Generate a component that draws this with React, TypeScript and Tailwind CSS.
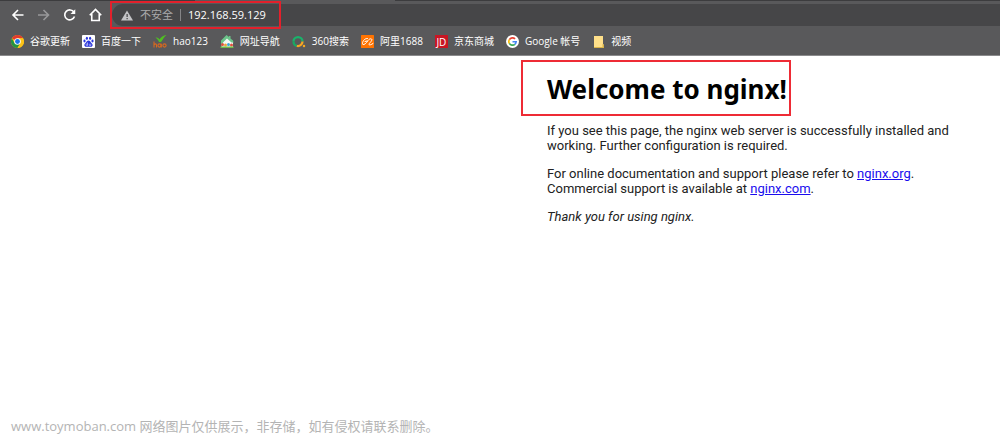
import type { ReactNode } from "react";

type Bookmark = {
  label: string;
  href: string;
  icon: ReactNode;
};

function ChromeIcon() {
  return (
    <svg viewBox="0 0 48 48" className="size-[13px]" aria-hidden="true">
      <circle cx="24" cy="24" r="24" fill="#fbc116" />
      <path d="M24 24 3.2 12A24 24 0 0 1 44.8 12H24z" fill="#e33b2e" />
      <path d="M3.2 12A24 24 0 0 0 24 48l10.4-18L24 24 13.6 30z" fill="#229342" />
      <path d="M24 12h20.8A24 24 0 0 1 24 48l10.4-18z" fill="#fbc116" />
      <circle cx="24" cy="24" r="12" fill="#fff" />
      <circle cx="24" cy="24" r="9" fill="#1a73e8" />
    </svg>
  );
}

function BaiduIcon() {
  return (
    <svg viewBox="0 0 26 26" className="size-[13px]" aria-hidden="true">
      <rect width="26" height="26" rx="2" fill="#fff" />
      <g fill="#2b36dc">
        <ellipse cx="5" cy="12" rx="2.2" ry="2.8" />
        <ellipse cx="9.800" cy="6.500" rx="2.2" ry="3" />
        <ellipse cx="16.200" cy="6.500" rx="2.2" ry="3" />
        <ellipse cx="21" cy="12" rx="2.2" ry="2.8" />
        <path d="M13 11c3 0 4 3 5.800 4.800 2.200 2 3.100 3.600 2.200 5.700-1.200 2.700-4.200 2.100-8 2.100s-6.800.6-8-2.100c-.9-2.100 0-3.700 2.200-5.700C9 14 10 11 13 11z" />
      </g>
      <path d="M11 15v6H9.500a1.500 1.500 0 1 1 0-3H11M14.500 17.500V20q0 1 1 1H17.500v-3.500" fill="none" stroke="#fff" strokeWidth="1" />
    </svg>
  );
}

function HaoIcon() {
  return (
    <svg viewBox="0 0 28 26" className="h-[13px] w-[14px]" aria-hidden="true">
      <path d="M5 5c4 0 6 1 8 4C16 4 20 1 27 0c-5 4-7 9-11 14h-4C11 10 8 8 5 5z" fill="#4fc021" />
      <g fill="none" stroke="#d9691e" strokeWidth="2.200">
        <path d="M2 13v12M2 20c1-3 5-3 5 0v5" />
        <circle cx="13" cy="21" r="3.200" />
        <path d="M16.500 17.500V25" />
        <circle cx="23" cy="21" r="3.200" />
      </g>
    </svg>
  );
}

function HouseIcon() {
  return (
    <svg viewBox="0 0 28 26" className="h-[13px] w-[14px]" aria-hidden="true">
      <path d="M3 13v12h23V13L14 4z" fill="#f5f7f5" />
      <path d="M13 0 2 11v6l3-1 9-9 9 8h4l-1-4-5-4V2h-3v2z" fill="#6cc48a" />
      <path d="M2 12h3v8H2z" fill="#6cc48a" />
      <circle cx="5" cy="19" r="3" fill="#e0503f" />
      <circle cx="11" cy="20" r="3" fill="#f0a33c" />
      <circle cx="17" cy="19" r="3" fill="#3aa6d8" />
      <circle cx="23" cy="20" r="3" fill="#e0503f" />
      <path d="M1 23h26v3H1z" fill="#6ebb4a" />
    </svg>
  );
}

function SearchRingIcon() {
  return (
    <svg viewBox="0 0 28 26" className="h-[13px] w-[14px]" aria-hidden="true">
      <g fill="none" strokeWidth="4.500">
        <path d="M3 13a9 9 0 0 1 18 0" stroke="#19b36b" />
        <path d="M21 13a9 9 0 0 1-12 8.500" stroke="#f5a623" />
        <path d="M3 13a9 9 0 0 0 6.500 8.700" stroke="#19a863" />
      </g>
      <circle cx="24" cy="22" r="2.500" fill="#f5a623" />
    </svg>
  );
}

function AlibabaIcon() {
  return (
    <svg viewBox="0 0 26 26" className="size-[13px]" aria-hidden="true">
      <rect width="26" height="26" rx="1" fill="#ff7300" />
      <path
        d="M13 7C8 6 3 12 3 17c0 5 7 1 11-6 2-3 5-4 7-3 3 2-4 8-5 10-1 3 4 2 8-1M8 13l4-1"
        fill="none"
        stroke="#fff"
        strokeWidth="2"
        strokeLinecap="round"
      />
    </svg>
  );
}

function JdIcon() {
  return (
    <span
      aria-hidden="true"
      className="grid size-[13px] place-items-center bg-[#c81623] font-['Open_Sans',sans-serif] text-[10px] leading-none text-white"
    >
      JD
    </span>
  );
}

function GoogleIcon() {
  return (
    <svg viewBox="0 0 48 48" className="size-[13px]" aria-hidden="true">
      <circle cx="24" cy="24" r="24" fill="#fff" />
      <g fill="none" strokeWidth="6">
        <path d="M33.500 14.500A13.500 13.500 0 0 0 12.300 17.200" stroke="#ea4335" />
        <path d="M12.300 17.200a13.500 13.500 0 0 0 0 13.600" stroke="#fbbc05" />
        <path d="M12.300 30.800a13.500 13.500 0 0 0 20.400 3.500" stroke="#34a853" />
        <path d="M32.700 34.300A13.500 13.500 0 0 0 37.500 25H24" stroke="#4285f4" />
      </g>
    </svg>
  );
}

function FolderIcon() {
  return (
    <span className="grid w-[13px] place-items-center" aria-hidden="true">
      <svg viewBox="0 0 20 24" className="h-[12px] w-[10px]">
        <path d="M0 0h18v16l2 2v6H0z" fill="#ffe08a" />
        <path d="M0 22h20v2H0zM17 16l3 2v6h-3z" fill="#d9b44a" />
      </svg>
    </span>
  );
}

const BOOKMARKS: Bookmark[] = [
  { label: "谷歌更新", href: "#chrome", icon: <ChromeIcon /> },
  { label: "百度一下", href: "#baidu", icon: <BaiduIcon /> },
  { label: "hao123", href: "#hao123", icon: <HaoIcon /> },
  { label: "网址导航", href: "#nav", icon: <HouseIcon /> },
  { label: "360搜索", href: "#so", icon: <SearchRingIcon /> },
  { label: "阿里1688", href: "#1688", icon: <AlibabaIcon /> },
  { label: "京东商城", href: "#jd", icon: <JdIcon /> },
  { label: "Google 帐号", href: "#google", icon: <GoogleIcon /> },
  { label: "视频", href: "#video", icon: <FolderIcon /> },
];

function NavButton({
  label,
  disabled,
  children,
}: {
  label: string;
  disabled?: boolean;
  children: ReactNode;
}) {
  return (
    <button
      type="button"
      aria-label={label}
      disabled={disabled}
      className="grid size-[14px] place-items-center text-white disabled:text-[#98989a]"
    >
      <svg
        viewBox="0 0 28 28"
        className="size-[14px]"
        fill="none"
        stroke="currentColor"
        strokeWidth="3.200"
        aria-hidden="true"
      >
        {children}
      </svg>
    </button>
  );
}

function Toolbar() {
  return (
    <div className="flex h-[28px] items-center pl-[11px]">
      <div className="flex shrink-0 items-center gap-3">
        <NavButton label="Back">
          <path d="M25 14H4M14 4 4 14l10 10" />
        </NavButton>
        <NavButton label="Forward" disabled>
          <path d="M2 14h21M13 4l10 10-10 10" />
        </NavButton>
        <NavButton label="Reload">
          <path d="M22 8.500A10 10 0 1 0 23 17" />
          <path d="M24.500 2.500V12H15z" fill="currentColor" stroke="none" />
        </NavButton>
        <NavButton label="Home">
          <path d="M1.500 14.500 13 3l11.500 11.500M5.500 12v13h15V12" />
        </NavButton>
      </div>
      <div className="relative ml-[9px] flex h-[22px] flex-1 items-center rounded-l-full bg-[#464648] pl-[9px]">
        <svg viewBox="0 0 24 22" className="h-[11px] w-[12px] shrink-0" aria-hidden="true">
          <path d="M12 1 24 21H0z" fill="#c4c4c6" />
          <path d="M11 8h2.500v6H11zM11 16h2.500v2.500H11z" fill="#464648" />
        </svg>
        <label htmlFor="address" className="ml-[7px] shrink-0 text-[11px] text-[#a9a9ab]">
          不安全
        </label>
        <span className="mx-[7px] h-3 w-px shrink-0 bg-[#858587]" />
        <input
          id="address"
          type="text"
          defaultValue="192.168.59.129"
          className="min-w-0 flex-1 bg-transparent text-[11px] font-medium text-white outline-none"
        />
        <div className="pointer-events-none absolute -top-[3px] -left-[2px] h-[28px] w-[171px] border-2 border-[#e3202b]" />
      </div>
    </div>
  );
}

export default function App() {
  return (
    <div className="flex min-h-screen flex-col bg-white">
      <header className="border-b border-[#8a8a8c] bg-[#59595b] font-['Open_Sans','Noto_Sans_CJK_SC',sans-serif]">
        <div className="flex h-px">
          <div className="w-[195px] bg-[#3c3c3e]" />
          <div className="w-[200px]" />
          <div className="flex-1 bg-[#3c3c3e]" />
        </div>
        <Toolbar />
        <nav className="flex h-[26px] items-center gap-3 pb-px pl-[11px]">
          {BOOKMARKS.map(({ label, href, icon }) => (
            <a
              key={label}
              href={href}
              className="flex shrink-0 items-center gap-[6px] text-[10px] whitespace-nowrap text-white"
            >
              {icon}
              {label}
            </a>
          ))}
        </nav>
      </header>

      <main className="ml-[52%] pt-1 pr-[50px] pl-px font-['Roboto',sans-serif] text-[13px] leading-[15px] text-[#222]">
        <h1 className="mb-[7px] flex h-[56px] w-fit items-center border-2 border-[#ee2b35] pt-[2px] pr-[2px] pl-6 font-['Noto_Sans',sans-serif] text-[26px] font-bold text-black">
          Welcome to nginx!
        </h1>
        <div className="space-y-[13px] pl-[26px]">
          <p>
            If you see this page, the nginx web server is successfully installed and working.
            Further configuration is required.
          </p>
          <p>
            For online documentation and support please refer to{" "}
            <a href="#nginx-org" className="text-[#1a0dee] underline">
              nginx.org
            </a>
            .
            <br />
            Commercial support is available at{" "}
            <a href="#nginx-com" className="text-[#1a0dee] underline">
              nginx.com
            </a>
            .
          </p>
          <p>
            <em>Thank you for using nginx.</em>
          </p>
        </div>
      </main>

      <footer className="mt-auto pl-[11px] font-['Open_Sans','Noto_Sans_CJK_SC',sans-serif] text-[13px] leading-[18px] text-[#b4b4b4]">
        www.toymoban.com 网络图片仅供展示，非存储，如有侵权请联系删除。
      </footer>
    </div>
  );
}
